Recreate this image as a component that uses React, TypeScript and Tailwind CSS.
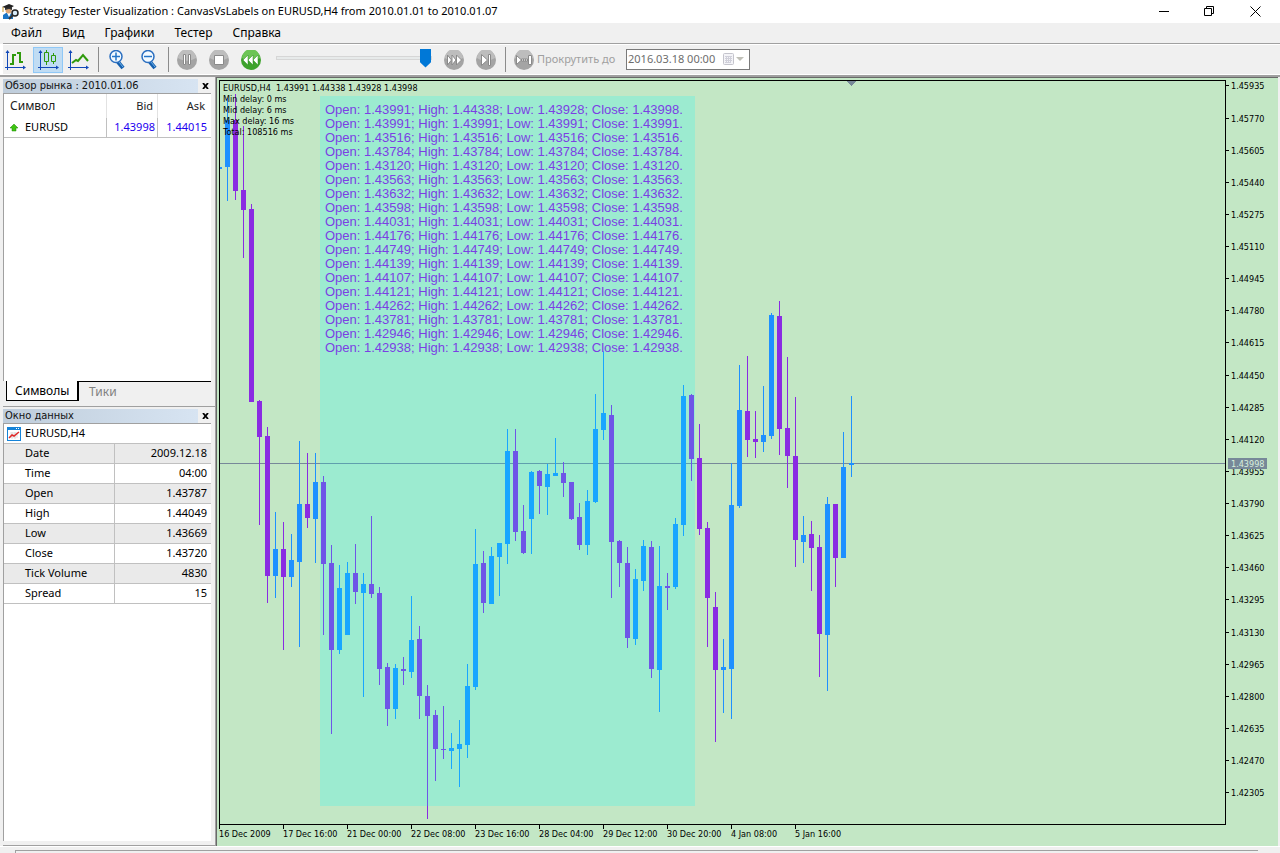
import React, { useState } from 'react';
import clsx from 'clsx';

type Candle = [high: number, top: number, bottom: number, low: number, up: 0 | 1];

// Vertical positions inside the plot, one candle every 8px
const candles: Candle[] = [
  [17, 39, 86, 120, 1], [13, 39, 110, 119, 0], [45, 109, 129, 177, 0], [123, 128, 321, 321, 0],
  [319, 320, 356, 444, 0], [346, 355, 495, 522, 0], [431, 468, 495, 517, 1], [441, 468, 496, 569, 0],
  [453, 479, 496, 506, 1], [360, 423, 481, 566, 1], [372, 423, 437, 447, 0], [372, 401, 438, 482, 1],
  [395, 401, 483, 554, 0], [464, 482, 569, 653, 0], [484, 507, 569, 573, 1], [481, 492, 554, 554, 1],
  [463, 492, 511, 523, 0], [492, 503, 512, 616, 1], [435, 503, 513, 517, 0], [506, 512, 588, 604, 0],
  [582, 586, 628, 645, 0], [583, 587, 628, 638, 1], [576, 588, 590, 604, 0], [515, 559, 591, 597, 1],
  [545, 558, 615, 638, 0], [604, 615, 635, 738, 0], [629, 634, 668, 700, 0], [625, 668, 669, 678, 0],
  [652, 667, 670, 688, 1], [639, 663, 668, 706, 1], [583, 605, 664, 677, 1], [448, 483, 606, 609, 1],
  [470, 482, 522, 532, 0], [466, 475, 523, 523, 1], [462, 462, 476, 515, 1], [348, 370, 463, 483, 1],
  [348, 370, 451, 460, 0], [424, 450, 472, 473, 0], [390, 391, 438, 473, 1], [389, 390, 405, 433, 0],
  [383, 393, 406, 434, 1], [357, 392, 395, 395, 1], [381, 392, 402, 416, 0], [401, 401, 438, 439, 0],
  [422, 436, 464, 469, 0], [409, 420, 464, 474, 1], [313, 348, 421, 422, 1], [270, 332, 349, 359, 1],
  [324, 334, 461, 517, 0], [459, 460, 482, 506, 0], [466, 482, 557, 567, 0], [488, 498, 558, 564, 1],
  [459, 465, 500, 510, 1], [460, 466, 588, 597, 0], [465, 505, 589, 631, 1], [492, 505, 507, 529, 0],
  [437, 443, 506, 508, 1], [304, 315, 444, 455, 1], [313, 314, 378, 400, 0], [343, 377, 448, 454, 0],
  [441, 447, 517, 566, 0], [511, 526, 589, 661, 0], [558, 586, 589, 632, 1], [382, 424, 588, 638, 1],
  [284, 329, 425, 427, 1], [275, 330, 359, 376, 0], [330, 358, 361, 377, 0], [305, 354, 361, 371, 1],
  [232, 234, 355, 358, 1], [220, 235, 348, 374, 0], [276, 347, 375, 407, 0], [316, 375, 459, 486, 0],
  [435, 454, 461, 482, 1], [440, 453, 467, 510, 0], [454, 466, 553, 596, 0], [416, 423, 554, 610, 1],
  [423, 423, 477, 506, 0], [351, 386, 477, 477, 1], [315, 382, 384, 396, 1],
];

const priceLabels = [
  '1.45935', '1.45770', '1.45605', '1.45440', '1.45275', '1.45110', '1.44945', '1.44780',
  '1.44615', '1.44450', '1.44285', '1.44120', '1.43955', '1.43790', '1.43625', '1.43460',
  '1.43295', '1.43130', '1.42965', '1.42800', '1.42635', '1.42470', '1.42305',
];

const timeLabels = [
  '16 Dec 2009', '17 Dec 16:00', '21 Dec 00:00', '22 Dec 08:00', '23 Dec 16:00',
  '28 Dec 04:00', '29 Dec 12:00', '30 Dec 20:00', '4 Jan 08:00', '5 Jan 16:00',
];

const quotes = [
  ['1.43991', '1.44338', '1.43928', '1.43998'],
  ...[
    '1.43991', '1.43516', '1.43784', '1.43120', '1.43563', '1.43632', '1.43598', '1.44031', '1.44176',
    '1.44749', '1.44139', '1.44107', '1.44121', '1.44262', '1.43781', '1.42946', '1.42938',
  ].map((v) => [v, v, v, v]),
];

const dataRows = [
  ['Date', '2009.12.18'],
  ['Time', '04:00'],
  ['Open', '1.43787'],
  ['High', '1.44049'],
  ['Low', '1.43669'],
  ['Close', '1.43720'],
  ['Tick Volume', '4830'],
  ['Spread', '15'],
];

const AppIcon = () => (
  <svg width="18" height="18" viewBox="0 0 18 18">
    <path d="M1 16v-4l3-2h5l2 3v3z" fill="#1b74c5" />
    <path d="M5 10l2 4 2-4z" fill="#fff" />
    <circle cx="6.500" cy="7.500" r="3" fill="#e0a878" />
    <path d="M0 4l7-3 5 2-5 3z" fill="#222" />
    <path d="M3 5v2l4-1 3 1V4z" fill="#333" />
    <path d="M1 4v5" stroke="#c99a2e" />
    <circle cx="13" cy="10" r="3" fill="#d8ecfa" stroke="#222" strokeWidth="1.500" />
    <path d="M11 12l-4 4" stroke="#333" strokeWidth="2" />
  </svg>
);

const Axes = () => (
  <g fill="#1148b8" stroke="#1148b8">
    <path d="M2.500 2v18M0 17.500h18" />
    <path d="M2.500 0l2 3h-4zM21 17.500l-3-2v4z" stroke="none" />
  </g>
);

const BarsIcon = () => (
  <svg width="21" height="20" viewBox="0 0 21 20">
    <Axes />
    <path d="M8 4v11M5 14h3M8 5h3M15 2v11M12 3h3M15 12h3" stroke="#2f9a0c" strokeWidth="2" fill="none" />
  </svg>
);

const CandlesIcon = () => (
  <svg width="21" height="20" viewBox="0 0 21 20">
    <Axes />
    <path d="M8.500 0v2M8.500 12v3M15.500 3v2M15.500 12v2M6.500 2.500h4v9h-4zM13.500 5.500h4v6h-4z" stroke="#2f9a0c" fill="none" />
  </svg>
);

const LineIcon = () => (
  <svg width="21" height="20" viewBox="0 0 21 20">
    <Axes />
    <path d="M4 13l4-3 2 1 5-6 5 6" stroke="#2f9a0c" strokeWidth="2" fill="none" />
  </svg>
);

const ZoomIcon = ({ plus }: { plus?: boolean }) => (
  <svg width="18" height="20" viewBox="0 0 18 20">
    <path d="M10 12l5 6" stroke="#155fae" strokeWidth="4" />
    <path d="M11 12l4 5" stroke="#6fb4ea" />
    <circle cx="8" cy="6.500" r="6" fill="#f3faff" stroke="#2b6fc0" strokeWidth="1.500" />
    <path d={plus ? 'M4 6.500h8M8 2.500v8' : 'M4 6.500h8'} stroke="#2475c8" strokeWidth="1.500" />
  </svg>
);

const RoundIcon = ({ green, children }: { green?: boolean; children: React.ReactNode }) => (
  <svg width="20" height="20" viewBox="0 0 20 20">
    <circle cx="10" cy="10" r="10" fill={green ? '#3da32c' : '#a4a4a4'} />
    <path d="M1 8a9 9 0 0 1 18 0c-5 3-12 4-18 0z" fill={green ? '#6cc455' : '#bdbdbd'} />
    <g fill="#fff" stroke={green ? '#2b8a1d' : '#8a8a8a'} strokeWidth={green ? '0.500' : '1'}>
      {children}
    </g>
  </svg>
);

const ToolButton = ({ label, active, className, children }: {
  label: string;
  active?: boolean;
  className?: string;
  children: React.ReactNode;
}) => (
  <button
    aria-label={label}
    className={clsx(
      'flex h-[26px] items-center justify-center',
      active && 'border border-[#90c8f6] bg-[#c0dcf3]',
      className
    )}
  >
    {children}
  </button>
);

const Separator = () => <div className="h-[25px] w-px bg-[#8c8c8c]" />;

const Toolbar = () => (
  <div className="ml-[3px] flex h-[29px] items-center bg-[#f0f0f0]">
    <ToolButton label="Bars" className="w-[25px]"><BarsIcon /></ToolButton>
    <ToolButton label="Candles" active className="ml-[5px] w-[30px]"><CandlesIcon /></ToolButton>
    <ToolButton label="Line" className="mr-1 w-[31px]"><LineIcon /></ToolButton>
    <Separator />
    <ToolButton label="Zoom in" className="ml-[2px] w-8"><ZoomIcon plus /></ToolButton>
    <ToolButton label="Zoom out" className="mr-[3px] w-8"><ZoomIcon /></ToolButton>
    <Separator />
    <ToolButton label="Pause" className="ml-[2px] w-8">
      <RoundIcon><path d="M6.500 4.500h2v10h-2zM11.500 4.500h2v10h-2z" /></RoundIcon>
    </ToolButton>
    <ToolButton label="Stop" className="w-8">
      <RoundIcon><path d="M5.500 5.500h9v9h-9z" /></RoundIcon>
    </ToolButton>
    <ToolButton label="Slower" className="w-8">
      <RoundIcon green>
        <path d="M7 5v10l-5-5zM12 5v10l-5-5zM17 5v10l-5-5z" />
      </RoundIcon>
    </ToolButton>
    <input
      type="range"
      aria-label="Speed"
      defaultValue={100}
      className="ml-[9px] mr-[6px] h-5 w-[156px] appearance-none bg-transparent [&::-webkit-slider-runnable-track]:-mt-1 [&::-webkit-slider-runnable-track]:h-1 [&::-webkit-slider-runnable-track]:border [&::-webkit-slider-runnable-track]:border-[#d6d6d6] [&::-webkit-slider-runnable-track]:bg-[#e7eaea] [&::-webkit-slider-thumb]:-mt-2 [&::-webkit-slider-thumb]:h-[19px] [&::-webkit-slider-thumb]:w-[11px] [&::-webkit-slider-thumb]:appearance-none [&::-webkit-slider-thumb]:bg-[#0078d7] [&::-webkit-slider-thumb]:[clip-path:polygon(0_0,100%_0,100%_72%,50%_100%,0_72%)]"
    />
    <ToolButton label="Faster" className="w-8">
      <RoundIcon><path d="M3.500 5v10l4-5zM8 5v10l4-5zM12.500 5v10l5-5z" /></RoundIcon>
    </ToolButton>
    <ToolButton label="Step" className="mr-[3px] w-8">
      <RoundIcon><path d="M5.500 4.500v11l6-5.500zM12.500 4.500h2v11h-2z" /></RoundIcon>
    </ToolButton>
    <Separator />
    <ToolButton label="Skip to" className="ml-2 w-5">
      <RoundIcon>
        <path d="M2.500 5.500v9l5-4.500zM14.500 5.500h3v9h-3z" />
        <path d="M7.500 9h2v2h-2zM9.500 9h2v2h-2zM11.500 9h2v2h-2z" />
      </RoundIcon>
    </ToolButton>
    <label htmlFor="skip-date" className="ml-[3px] w-[83px] whitespace-nowrap text-[11px] text-[#a0a0a0]">
      Прокрутить до
    </label>
    <div className="ml-[6px] flex h-[21px] w-[124px] items-center border border-[#7a7a7a] bg-white">
      <input
        id="skip-date"
        defaultValue="2016.03.18 00:00"
        className="w-[92px] pl-px text-[11px] text-[#6d6d6d] outline-none"
      />
      <button aria-label="Open calendar" className="ml-1">
        <svg width="21" height="13" viewBox="0 0 21 13">
          <rect x="0.500" y="0.500" width="10" height="11" rx="1" fill="#f4f4f8" stroke="#c4c4cc" />
          <path d="M2 3.500h7M2 5.500h7M2 7.500h7M2 9.500h5M3.500 3v7M5.500 3v7M7.500 3v7" stroke="#d0d0da" />
          <path d="M13 4h8l-4 4z" fill="#c0c0b8" />
        </svg>
      </button>
    </div>
  </div>
);

const PanelHeader = ({ title }: { title: string }) => (
  <div className="flex h-[14px] items-center">
    <h2 className="h-full w-[195px] whitespace-nowrap bg-linear-to-r from-[#bfcddb] to-[#d7e4f2] pl-[2px] font-['DejaVu_Sans_Condensed','DejaVu_Sans',sans-serif] text-[11px] leading-[13px] text-[#111]">
      {title}
    </h2>
    <button aria-label="Close panel" className="ml-1">
      <svg width="7" height="6" viewBox="0 0 7 6">
        <path d="M1 0l5 6M6 0L1 6" stroke="#000" strokeWidth="1.800" />
      </svg>
    </button>
  </div>
);

const MarketWatch = () => {
  const [tab, setTab] = useState('Символы');

  return (
    <section className="flex h-[328px] shrink-0 flex-col border-b border-[#a0a0a0]">
      <PanelHeader title="Обзор рынка : 2010.01.06" />
      <div className="mr-1 flex-1 border-l border-t border-[#a0a0a0] bg-white">
        <table className="w-full table-fixed border-separate border-spacing-0 text-[11px]">
          <thead>
            <tr className="h-6 text-[#222]">
              <th className="w-[103px] border-r border-[#e2e2e2] pl-[6px] text-left text-[12px] font-normal">Символ</th>
              <th className="w-[51px] border-r border-[#e2e2e2] pr-1 text-right font-normal">Bid</th>
              <th className="pr-[6px] text-right font-normal">Ask</th>
            </tr>
          </thead>
          <tbody>
            <tr className="h-5">
              <td className="border-b border-r border-[#c0c0c0] pl-[6px]">
                <span className="flex items-center gap-[7px]">
                  <svg width="8" height="8" viewBox="0 0 8 8">
                    <path d="M4 0l4 4H6v3H2V4H0z" fill="#3fc412" stroke="#1d8a06" strokeWidth="0.500" />
                  </svg>
                  EURUSD
                </span>
              </td>
              <td className="border-b border-r border-[#c0c0c0] pr-[2px] text-right text-[#1c00f0]">1.43998</td>
              <td className="border-b border-[#c0c0c0] pr-1 text-right text-[#1c00f0]">1.44015</td>
            </tr>
          </tbody>
        </table>
      </div>
      <div role="tablist" className="mr-1 flex h-[25px] items-start pl-[3px] text-[12px]">
        {['Символы', 'Тики'].map((name) => (
          <button
            key={name}
            role="tab"
            aria-selected={tab === name}
            onClick={() => setTab(name)}
            className={clsx(
              'h-5 leading-[18px]',
              tab === name
                ? 'w-[73px] border-b border-l border-r-2 border-black bg-white px-2 text-black'
                : 'border-t border-black px-[10px] text-[#808080]'
            )}
          >
            {name}
          </button>
        ))}
        <div className="h-px flex-1 bg-black" />
      </div>
    </section>
  );
};

const DataWindow = () => (
  <section className="mt-[2px] flex flex-1 flex-col pb-1">
    <PanelHeader title="Окно данных" />
    <div className="mr-1 flex-1 border-l border-t border-[#a0a0a0] bg-white text-[11px]">
      <div className="flex h-5 items-center gap-1 border-b border-[#c0c0c0] pl-[3px]">
        <svg width="14" height="14" viewBox="0 0 14 14">
          <rect x="0.500" y="0.500" width="13" height="13" fill="#fff" stroke="#1583d8" />
          <path d="M0 0h14v3H0z" fill="#1583d8" />
          <path d="M9 1h1v1H9zM11 1h1v1h-1z" fill="#fff" />
          <path d="M3 6h8M3 8h8M3 10h8M5 5v7M8 5v7" stroke="#ddd" />
          <path d="M2 11l3-3 2 1 5-4" stroke="#e02a2a" strokeWidth="1.500" fill="none" />
        </svg>
        EURUSD,H4
      </div>
      <table className="w-full table-fixed border-separate border-spacing-0">
        <tbody>
          {dataRows.map(([name, value]) => (
            <tr key={name} className="h-5 odd:bg-[#eaeaea]">
              <th className="w-[111px] border-b border-r border-[#c0c0c0] pl-[21px] text-left font-normal">{name}</th>
              <td className="border-b border-[#c0c0c0] pr-1 text-right">{value}</td>
            </tr>
          ))}
        </tbody>
      </table>
    </div>
  </section>
);

const CandleShape = ({ candle, x }: { candle: Candle; x: number }) => {
  const [high, top, bottom, low, up] = candle;
  return (
    <g fill={up ? '#1e90ff' : '#8a2be2'}>
      <rect x={x} y={high} width="1" height={low - high} />
      <rect x={x - 2} y={top} width="5" height={bottom - top} />
    </g>
  );
};

const Chart = () => (
  <main className="mr-[2px] grid min-w-0 flex-1 grid-cols-[1fr_52px] grid-rows-[1fr_21px] border-l border-t border-[#696969] bg-[#c3e7c5] pl-[2px] pt-[2px] font-['DejaVu_Sans_Condensed','DejaVu_Sans',sans-serif] text-[9px] text-black">
    <div className="relative min-h-0 overflow-hidden border border-black">
      <svg className="absolute inset-0 h-full w-full" shapeRendering="crispEdges">
        <rect x="0" y="382" width="100%" height="1" fill="#778899" />
        <rect x="0" y="86" width="2" height="2" fill="#1e90ff" />
        {candles.map((candle, i) => (
          <CandleShape key={i} candle={candle} x={7 + i * 8} />
        ))}
        <rect x="100" y="15" width="375" height="710" fill="#00ffff" fillOpacity="0.200" />
        <path d="M627 0h9l-4.500 5z" fill="#778899" />
      </svg>
      <div className="absolute left-[3px] top-[2px] whitespace-pre leading-[11px]">
        <p>EURUSD,H4  1.43991 1.44338 1.43928 1.43998</p>
        <p>Min delay: 0 ms</p>
        <p>Mid delay: 6 ms</p>
        <p>Max delay: 16 ms</p>
        <p>Total: 108516 ms</p>
      </div>
      <div className="absolute left-[105px] top-[22px] whitespace-nowrap font-['Liberation_Sans',Arial,sans-serif] text-[13px] leading-[14px] text-[#7b3fe4]">
        {quotes.map(([open, high, low, close], i) => (
          <p key={i}>
            Open: {open}; High: {high}; Low: {low}; Close: {close}.
          </p>
        ))}
      </div>
    </div>
    <svg className="h-full w-full">
      {priceLabels.map((label, i) => {
        const y = Math.round(5.4 + i * 32.13);
        return (
          <g key={label}>
            <rect y={y} width="3" height="1" />
            <text x="5" y={y + 4}>{label}</text>
          </g>
        );
      })}
      <rect x="2" y="378" width="39" height="11" fill="#778899" />
      <text x="5" y="387" fill="#d9f0dc">1.43998</text>
    </svg>
    <div className="col-span-2 flex">
      {timeLabels.map((label) => (
        <div key={label} className="w-16 shrink-0 whitespace-nowrap leading-[11px]">
          <div className="h-1 w-px bg-black" />
          {label}
        </div>
      ))}
    </div>
  </main>
);

const menuItems = ['Файл', 'Вид', 'Графики', 'Тестер', 'Справка'];

const App: React.FC = () => {
  return (
    <div className="flex h-screen flex-col overflow-hidden bg-[#f0f0f0] font-['Noto_Sans','Open_Sans',sans-serif] text-[12px] text-black">
      <header className="flex h-[23px] shrink-0 items-center bg-white pl-[2px]">
        <AppIcon />
        <h1 className="ml-[3px] flex-1 truncate text-[11px]">
          Strategy Tester Visualization : CanvasVsLabels on EURUSD,H4 from 2010.01.01 to 2010.01.07
        </h1>
        <button aria-label="Minimize" className="flex w-[43px] justify-center">
          <svg width="11" height="11"><path d="M0 5.500h10" stroke="#000" /></svg>
        </button>
        <button aria-label="Restore" className="flex w-[46px] justify-center">
          <svg width="11" height="11"><path d="M.5 2.500h7v7h-7zM2.500 2.500v-2h7v7h-2" fill="none" stroke="#000" /></svg>
        </button>
        <button aria-label="Close" className="mr-[2px] flex w-[46px] justify-center">
          <svg width="11" height="11"><path d="M.5.5l10 10M10.500.5l-10 10" stroke="#000" /></svg>
        </button>
      </header>
      <nav className="ml-[3px] flex h-[21px] shrink-0 items-center gap-5 border-b border-[#a0a0a0] pl-2">
        {menuItems.map((item) => (
          <button key={item}>{item}</button>
        ))}
      </nav>
      <div className="shrink-0 border-b-2 border-[#a0a0a0] bg-white py-px">
        <Toolbar />
      </div>
      <div className="flex min-h-0 flex-1">
        <aside className="ml-[3px] flex w-[213px] shrink-0 flex-col border-b border-r border-[#a0a0a0] pt-[2px]">
          <MarketWatch />
          <DataWindow />
        </aside>
        <Chart />
      </div>
      <footer className="h-[7px] shrink-0 border-t border-white pt-[3px]">
        <div className="ml-[15px] mr-[22px] h-1 border-l border-t border-[#a0a0a0]" />
      </footer>
    </div>
  );
};

export default App;
